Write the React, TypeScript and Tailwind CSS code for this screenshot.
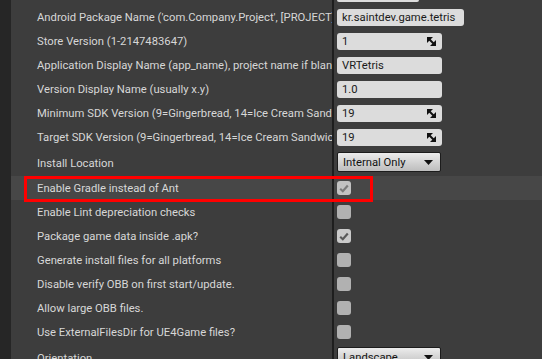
import React from "react";

type Row =
  | { label: string; kind: "text"; value: string; wide?: boolean }
  | { label: string; kind: "spin"; value: string }
  | { label: string; kind: "combo"; value: string }
  | { label: string; kind: "check"; checked: boolean; dim?: boolean };

const rows: Row[] = [
  { label: "Android Package Name ('com.Company.Project', [PROJECT] is replaced with project name)", kind: "text", value: "kr.saintdev.game.tetris", wide: true },
  { label: "Store Version (1-2147483647)", kind: "spin", value: "1" },
  { label: "Application Display Name (app_name), project name if blank", kind: "text", value: "VRTetris" },
  { label: "Version Display Name (usually x.y)", kind: "text", value: "1.0" },
  { label: "Minimum SDK Version (9=Gingerbread, 14=Ice Cream Sandwich, 21=Lollipop)", kind: "spin", value: "19" },
  { label: "Target SDK Version (9=Gingerbread, 14=Ice Cream Sandwich, 21=Lollipop)", kind: "spin", value: "19" },
  { label: "Install Location", kind: "combo", value: "Internal Only" },
  { label: "Enable Gradle instead of Ant", kind: "check", checked: true, dim: true },
  { label: "Enable Lint depreciation checks", kind: "check", checked: false },
  { label: "Package game data inside .apk?", kind: "check", checked: true },
  { label: "Generate install files for all platforms", kind: "check", checked: false },
  { label: "Disable verify OBB on first start/update.", kind: "check", checked: false },
  { label: "Allow large OBB files.", kind: "check", checked: false },
  { label: "Use ExternalFilesDir for UE4Game files?", kind: "check", checked: false },
  { label: "Orientation", kind: "combo", value: "Landscape" },
];

const SpinIcon = () => (
  <svg width="9" height="9" viewBox="0 0 9 9" className="shrink-0">
    <polygon points="0,0 6,0 0,6" fill="#111" />
    <polygon points="9,9 3,9 9,3" fill="#111" />
    <line x1="2" y1="2" x2="7" y2="7" stroke="#111" strokeWidth="2" />
  </svg>
);

const Check = ({ checked, dim }: { checked: boolean; dim?: boolean }) => (
  <div
    className={`w-[14px] h-[14px] rounded-[3px] flex items-center justify-center ${
      dim ? "bg-[#c2c2c2]" : checked ? "bg-[#cacaca]" : "bg-[#b1b1b1]"
    }`}
  >
    {checked && (
      <svg width="10" height="9" viewBox="0 0 10 9">
        <path
          d="M1.2 4.8 L3.8 7.2 L8.8 1.6"
          fill="none"
          stroke={dim ? "#7a7a7a" : "#5a5a5a"}
          strokeWidth="2.2"
        />
      </svg>
    )}
  </div>
);

const Value = ({ row }: { row: Row }) => {
  if (row.kind === "check") return <Check checked={row.checked} dim={row.dim} />;
  if (row.kind === "combo")
    return (
      <div className="w-[104px] h-[20px] rounded-[2px] border border-[#1c1c1c] bg-gradient-to-b from-[#ececec] to-[#bdbdbd] flex items-center justify-between pl-[5px] pr-[7px] text-[#111]">
        <span className="pt-[2px]">{row.value}</span>
        <svg width="9" height="5" viewBox="0 0 9 5">
          <polygon points="0,0 9,0 4.5,5" fill="#111" />
        </svg>
      </div>
    );
  return (
    <div
      className={`${
        row.kind === "text" && row.wide ? "w-[127px]" : "w-[105px]"
      } h-[17px] rounded-[3px] bg-[#dcdcdc] flex items-center justify-between pl-[5px] pr-[6px] text-[#1a1a1a] whitespace-nowrap`}
    >
      <span className="pt-[1px]">{row.value}</span>
      {row.kind === "spin" && <SpinIcon />}
    </div>
  );
};

export default function App() {
  return (
    <div
      className="relative w-[542px] h-[359px] overflow-hidden bg-[#262626] flex text-[11.25px] leading-none"
      style={{ fontFamily: "Roboto, 'Noto Sans', sans-serif" }}
    >
      <div className="w-[11px] shrink-0" />
      <div className="flex-1 bg-[#3d3d3d] flex flex-col">
        <div className="h-[5px] flex shrink-0">
          <div className="w-[321px] shrink-0" />
          <div className="w-[2px] bg-[#1e1e1e]" />
          <div className="pl-[3px]">
            <div className="w-[82px] h-[2px] rounded-b-[3px] bg-[#dcdcdc]" />
          </div>
        </div>
        {rows.map((row, i) => {
          const h = row.kind === "combo" ? (i === 6 ? "h-[27px]" : "h-[28px]") : "h-[24px]";
          const hl = row.label.startsWith("Enable Gradle");
          return (
            <div key={i} className={`${h} flex shrink-0 ${hl ? "bg-[#474747]" : ""}`}>
              <div className="w-[321px] shrink-0 pl-[26px] pt-[2px] flex items-center overflow-hidden whitespace-nowrap text-[#d7d7d7]">
                {row.label}
              </div>
              <div className="w-[2px] bg-[#1e1e1e] shrink-0" />
              <div className={`flex-1 pl-[3px] flex ${row.kind === "combo" ? "items-start pt-[3px]" : "items-center"}`}>
                <Value row={row} />
              </div>
            </div>
          );
        })}
      </div>
      <div className="absolute left-[24px] top-[176px] w-[349px] h-[26px] border-[3px] border-[#ff0000]" />
    </div>
  );
}
